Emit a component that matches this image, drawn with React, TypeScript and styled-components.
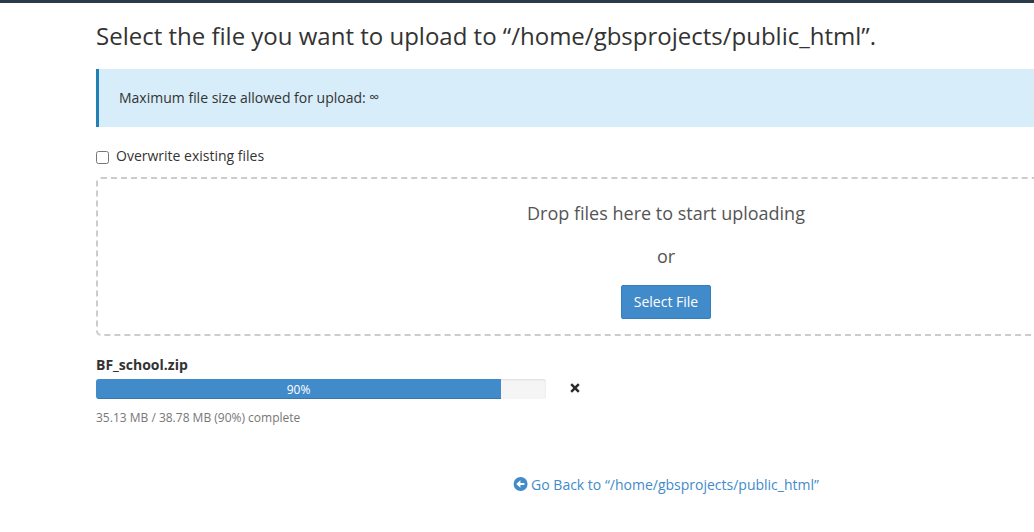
import React from "react";
import styled, { createGlobalStyle } from "styled-components";

const GlobalStyle = createGlobalStyle`
  * { box-sizing: border-box; }
  html, body { margin: 0; padding: 0; background: #fff; overflow: hidden; }
  body {
    font: 14px/20px "Open Sans", sans-serif;
    color: #333;
  }
`;

const TopBar = styled.div`
  height: 3px;
  background: #293a4a;
`;

const Page = styled.main`
  width: 1140px;
  height: 529px;
  margin-left: 96px;
  padding-top: 20px;
`;

const Title = styled.h1`
  margin: 0 0 20px;
  font-size: 24px;
  font-weight: 400;
  line-height: 26px;
  white-space: nowrap;
`;

const Callout = styled.div`
  height: 58px;
  padding: 19px 20px;
  border-left: 3px solid #2281b4;
  background: #d7edf9;
`;

const Limit = styled.span`
  display: inline-block;
  transform: translateY(-1px);
`;

const Option = styled.label`
  display: flex;
  align-items: center;
  gap: 7px;
  height: 20px;
  margin-top: 19px;
`;

const Check = styled.input`
  width: 13px;
  height: 13px;
  margin: 3px 0 0;
`;

const DropZone = styled.section`
  display: flex;
  flex-direction: column;
  align-items: center;
  height: 159px;
  margin-top: 11px;
  padding-top: 24px;
  border: 2px dashed #ccc;
  border-radius: 5px;
`;

const DropText = styled.div`
  height: 20px;
  margin-bottom: 23px;
  font-size: 18px;
  color: #555;
`;

const Button = styled.button`
  width: 90px;
  height: 34px;
  margin-top: -4px;
  padding: 0;
  border: 1px solid #357ebd;
  border-radius: 2px;
  background: #428bca;
  color: #fff;
  font: inherit;
`;

const FileName = styled.div`
  margin-top: 19px;
  font-weight: 700;
`;

const ProgressRow = styled.div`
  display: flex;
  align-items: center;
  gap: 24px;
  height: 20px;
  margin-top: 4px;
`;

const Track = styled.div`
  width: 450px;
  height: 20px;
  overflow: hidden;
  border-radius: 3px;
  background: #f5f5f5;
  box-shadow: inset 0 1px 2px rgba(0, 0, 0, 0.1);
`;

const Fill = styled.div`
  height: 20px;
  padding-top: 1px;
  background: #428bca;
  box-shadow: inset 0 -1px 0 rgba(0, 0, 0, 0.15);
  color: #fff;
  font-size: 12px;
  text-align: center;
`;

const CancelIcon = styled.svg`
  margin-bottom: 2px;
`;

const Status = styled.div`
  margin-top: 9px;
  font-size: 12px;
  color: #777;
`;

const BackLink = styled.a`
  display: flex;
  justify-content: center;
  align-items: center;
  gap: 3px;
  height: 20px;
  margin-top: 47px;
  color: #428bca;
`;

const BackIcon = styled.svg`
  margin-bottom: 2px;
`;

const percent = 90;

export default function App() {
  return (
    <>
      <GlobalStyle />
      <TopBar />
      <Page>
        <Title>Select the file you want to upload to “/home/gbsprojects/public_html”.</Title>
        <Callout>Maximum file size allowed for upload: <Limit>∞</Limit></Callout>
        <Option><Check type="checkbox" />Overwrite existing files</Option>
        <DropZone>
          <DropText>Drop files here to start uploading</DropText>
          <DropText>or</DropText>
          <Button>Select File</Button>
        </DropZone>
        <FileName>BF_school.zip</FileName>
        <ProgressRow>
          <Track><Fill style={{ width: `${percent}%` }}>{percent}%</Fill></Track>
          <CancelIcon width="10" height="10" viewBox="0 0 10 10">
            <path d="M1.2 1.2 8.8 8.8M8.8 1.2 1.2 8.8" stroke="#2b2b2b" strokeWidth="2.5" />
          </CancelIcon>
        </ProgressRow>
        <Status>35.13 MB / 38.78 MB (90%) complete</Status>
        <BackLink>
          <BackIcon width="15" height="14" viewBox="0 0 15 14">
            <circle cx="7.6" cy="7" r="7" fill="#428bca" />
            <path d="M3.2 7 7.4 3.3V5.9h4v2.2h-4v2.6Z" fill="#fff" />
          </BackIcon>
          Go Back to “/home/gbsprojects/public_html”
        </BackLink>
      </Page>
    </>
  );
}
